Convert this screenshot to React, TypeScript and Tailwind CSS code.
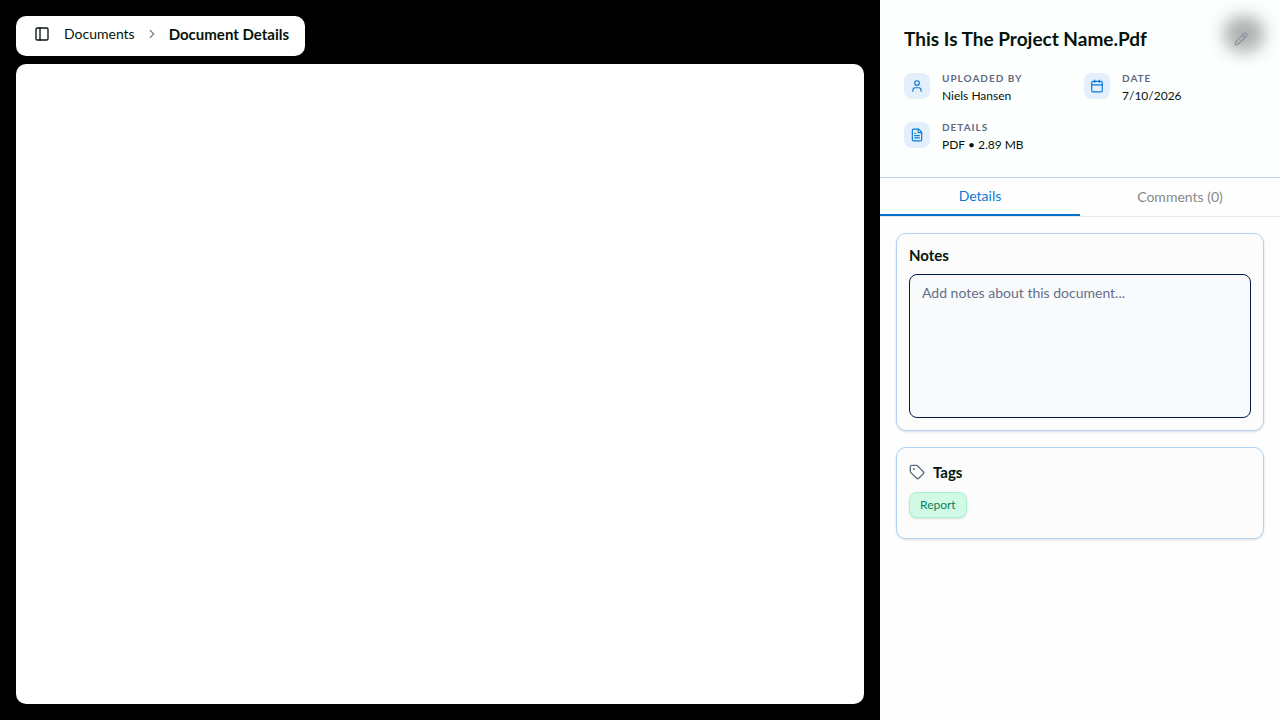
import React, { useState } from 'react';
import { Calendar, ChevronRight, FileText, PanelLeft, Pencil, Tag, User } from 'lucide-react';

const meta = [
  { label: 'Uploaded by', value: 'Niels Hansen', icon: User },
  { label: 'Date', value: '7/10/2026', icon: Calendar },
  { label: 'Details', value: 'PDF • 2.89 MB', icon: FileText },
];

const tabs = [
  { id: 'details', label: 'Details' },
  { id: 'comments', label: 'Comments (0)' },
];

const tags = ['Report'];

const Breadcrumbs = () => (
  <header className="flex h-10 items-center self-start rounded-[10px] bg-white px-4 pb-1">
    <button type="button" aria-label="Toggle sidebar" className="mr-3 p-0.5">
      <PanelLeft size={16} />
    </button>
    <nav aria-label="Breadcrumb" className="flex items-center gap-2.5 text-sm">
      <a href="#documents">Documents</a>
      <ChevronRight size={14} className="text-[#7b807b]" />
      <span aria-current="page" className="text-[15px] leading-[18px] font-bold">
        Document Details
      </span>
    </nav>
  </header>
);

const DocumentHeader = () => (
  <div className="border-b border-[#b3d0ee] bg-[#fdfefe] p-6">
    <div className="mb-4 flex h-[31px] items-start justify-between">
      <h1 className="text-[19px] leading-[30px] font-bold">This Is The Project Name.Pdf</h1>
      <button type="button" aria-label="Rename document" className="relative p-2 text-[#8e929b]">
        <span className="absolute -top-2 -left-0.5 h-9 w-10 rounded-2xl bg-black/30 blur-[8px]" />
        <Pencil size={14} className="relative" />
      </button>
    </div>
    <dl className="grid grid-cols-2 gap-x-2 gap-y-4">
      {meta.map(({ label, value, icon: Icon }) => (
        <div key={label} className="flex items-start gap-3">
          <span className="mt-0.5 rounded-lg bg-[#e3effb] p-1.5 text-[#0b78d4]">
            <Icon size={14} />
          </span>
          <div>
            <dt className="text-[10px] leading-[14px] font-bold tracking-widest text-[#5f6b85] uppercase">{label}</dt>
            <dd className="mt-[3px] text-xs">{value}</dd>
          </div>
        </div>
      ))}
    </dl>
  </div>
);

export default function App() {
  const [activeTab, setActiveTab] = useState('details');
  const [notes, setNotes] = useState('');

  return (
    <div className="flex min-h-screen bg-black font-[Lato,sans-serif] text-[#04140a]">
      <main className="flex flex-1 flex-col gap-2 p-4">
        <Breadcrumbs />
        <section aria-label="Document preview" className="flex-1 rounded-[10px] bg-white" />
      </main>

      <aside className="w-[400px] bg-[#fefefe]">
        <DocumentHeader />

        <div role="tablist" className="flex border-b border-[#e2e8f0] text-sm">
          {tabs.map((tab) => (
            <button
              key={tab.id}
              type="button"
              role="tab"
              aria-selected={activeTab === tab.id}
              onClick={() => setActiveTab(tab.id)}
              className={`h-[38px] flex-1 ${
                activeTab === tab.id ? 'border-b-2 border-[#0670ca] text-[#0b78d4]' : 'text-[#858a86]'
              }`}
            >
              {tab.label}
            </button>
          ))}
        </div>

        {activeTab === 'details' && (
          <div className="flex flex-col gap-4 p-4">
            <section className="rounded-[10px] border border-[#b3d3f4] bg-[#fcfcfc] p-3 shadow-sm">
              <label htmlFor="notes" className="block pb-2.5 text-[15px] leading-[18px] font-bold">
                Notes
              </label>
              <textarea
                id="notes"
                value={notes}
                onChange={(e) => setNotes(e.target.value)}
                placeholder="Add notes about this document..."
                className="block h-36 w-full resize-none rounded-lg border border-[#021d45] bg-[#f9fafc] px-3 py-2 text-sm outline-none placeholder:text-[#64708a]"
              />
            </section>

            <section className="rounded-[10px] border border-[#b3d3f4] bg-[#fcfcfc] px-3 pt-3.5 pb-5 shadow-sm">
              <h2 className="mb-2.5 flex items-center gap-2 text-[15px] leading-5 font-bold">
                <Tag size={16} className="text-[#5f6b80]" />
                Tags
              </h2>
              <ul className="flex flex-wrap gap-2">
                {tags.map((tag) => (
                  <li
                    key={tag}
                    className="rounded-lg border border-[#a7f3d0] bg-[#d0fae5] px-2.5 py-1 text-xs text-[#0b7f5c] shadow-sm"
                  >
                    {tag}
                  </li>
                ))}
              </ul>
            </section>
          </div>
        )}
      </aside>
    </div>
  );
}
